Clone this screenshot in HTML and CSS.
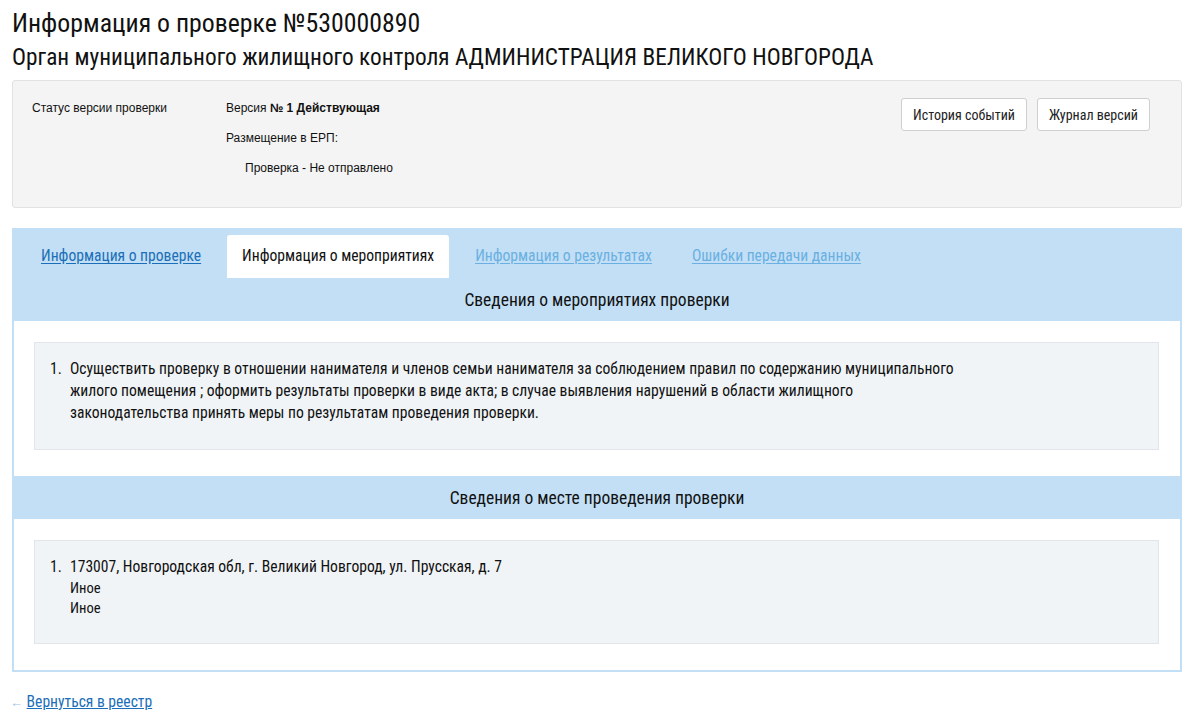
FILE: index.html
```html
<!DOCTYPE html>
<html lang="ru">
<head>
<meta charset="utf-8">
<title>Информация о проверке</title>
<link rel="stylesheet" href="styles.css">
</head>
<body>
<div class="page">
  <h1 class="title">Информация о проверке №530000890</h1>
  <h2 class="subtitle">Орган муниципального жилищного контроля АДМИНИСТРАЦИЯ ВЕЛИКОГО НОВГОРОДА</h2>

  <div class="status-box">
    <div class="status-label">Статус версии проверки</div>
    <div class="status-info">
      <div class="status-line">Версия <b>№ 1 Действующая</b></div>
      <div class="status-line">Размещение в ЕРП:</div>
      <div class="status-line indent">Проверка - Не отправлено</div>
    </div>
    <div class="status-actions">
      <button class="btn">История событий</button>
      <button class="btn">Журнал версий</button>
    </div>
  </div>

  <div class="panel">
    <div class="tabs">
      <a class="tab link" href="#">Информация о проверке</a>
      <span class="tab active">Информация о мероприятиях</span>
      <a class="tab link disabled" href="#">Информация о результатах</a>
      <a class="tab link disabled" href="#">Ошибки передачи данных</a>
    </div>
    <div class="section-head">Сведения о мероприятиях проверки</div>
    <div class="section-body">
      <div class="card">
        <div class="item">
          <span class="num">1.</span>
          <div class="item-text">Осуществить проверку в отношении нанимателя и членов семьи нанимателя за соблюдением правил по содержанию муниципального<br>жилого помещения ; оформить результаты проверки в виде акта; в случае выявления нарушений в области жилищного<br>законодательства принять меры по результатам проведения проверки.</div>
        </div>
      </div>
    </div>
    <div class="section-head">Сведения о месте проведения проверки</div>
    <div class="section-body">
      <div class="card card-place">
        <div class="item">
          <span class="num">1.</span>
          <div class="item-text">173007, Новгородская обл, г. Великий Новгород, ул. Прусская, д. 7<span class="small">Иное</span><span class="small">Иное</span></div>
        </div>
      </div>
    </div>
  </div>

  <div class="back"><span class="arrow">←</span> <a href="#">Вернуться в реестр</a></div>
</div>
</body>
</html>
```

FILE: styles.css
```css
* { box-sizing: border-box; }
html, body { margin: 0; padding: 0; background: #fff; }
body {
  font-family: "Roboto Condensed", Roboto, "Liberation Sans", sans-serif;
  font-stretch: 75%;
  color: #111;
}
.page { padding: 0 18px 0 12px; }
.title {
  margin: 0;
  padding-top: 8px;
  font-size: 25.8px;
  font-weight: 400;
  line-height: 30px;
}
.subtitle {
  margin: 6px 0 0;
  font-size: 23.3px;
  font-weight: 400;
  line-height: 27px;
}
.status-box {
  margin-top: 9px;
  height: 128px;
  background: #f4f4f4;
  border: 1px solid #e2e2e2;
  border-radius: 3px;
  display: flex;
  padding: 19px 31px 0 19px;
  font-family: "Liberation Sans", Arial, sans-serif;
  font-stretch: 100%;
  font-size: 12px;
  color: #111;
}
.status-label { width: 194px; line-height: 16px; }
.status-line { line-height: 16px; margin-bottom: 14px; }
.status-line.indent { padding-left: 19px; }
.status-info { flex: 1; }
.status-actions { display: flex; gap: 10px; align-items: flex-start; margin-top: -2px; }
.btn {
  font-family: "Roboto Condensed", Roboto, sans-serif;
  font-stretch: 75%;
  font-size: 14px;
  color: #222;
  background: #fff;
  border: 1px solid #cfcfcf;
  border-radius: 3px;
  height: 33px;
  padding: 0 11px;
}
.panel {
  margin-top: 20px;
  background: #c2dff5;
  border: 2px solid #c2dff5;
  border-top: 0;
}
.tabs {
  display: flex;
  align-items: flex-end;
  height: 50px;
  padding-left: 15px;
}
.tab {
  font-size: 15.6px;
  line-height: 43px;
  padding: 0 12px;
  margin-right: 14px;
}
.tab.link { color: #1b6fb8; text-decoration: underline; text-underline-offset: 2px; }
.tab.disabled { color: #6ab0e2; margin-right: 16px; }
.tab.active {
  background: #fff;
  color: #111;
  border-radius: 3px 3px 0 0;
  padding: 0 15px;
  margin-right: 14px;
}
.section-head {
  height: 43px;
  line-height: 44px;
  text-align: center;
  font-size: 17.5px;
  color: #111;
}
.section-body {
  background: #fff;
  padding: 21px 21px 26px 20px;
}
.card {
  background: #f0f4f7;
  border: 1px solid #e2e6ea;
  padding: 15px 16px 25px 15px;
}
.card-place { padding-bottom: 25px; }
.item {
  display: flex;
  font-size: 15.6px;
  line-height: 22px;
}
.num { width: 20px; flex: none; }
.small { display: block; font-size: 14.6px; line-height: 20px; }
.back {
  margin-top: 21px;
  font-size: 15.6px;
  margin-left: -2px;
}
.back .arrow { color: #9cc3e5; font-size: 13px; }
.back a { color: #1b6fb8; text-decoration: underline; }
```
